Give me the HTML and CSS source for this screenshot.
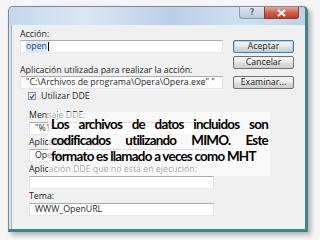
FILE: index.html
```html
<!DOCTYPE html>
<html lang="es">
<head>
<meta charset="utf-8">
<link rel="stylesheet" href="styles.css">
</head>
<body>
<div class="window">
  <div class="titlebar">
    <div class="tb-btn help">?</div>
    <div class="tb-btn close">
      <svg width="11" height="8" viewBox="0 0 11 8"><path d="M2 1 L9 7 M9 1 L2 7" stroke="#fff" stroke-width="2" fill="none"/></svg>
    </div>
  </div>
  <div class="content">
    <div class="fields">
      <div class="label">Acción:</div>
      <div class="input"><span class="sel">open</span><span class="caret"></span></div>
      <div class="label gap">Aplicación utilizada para realizar la acción:</div>
      <div class="input">"C:\Archivos de programa\Opera\Opera.exe" "</div>
      <div class="check-row">
        <span class="checkbox"><svg width="7" height="7" viewBox="0 0 7 7"><path d="M1 3.5 L3 5.5 L6.2 1" stroke="#2a5aa8" stroke-width="1.5" fill="none"/></svg></span>
        <span class="check-label">Utilizar DDE</span>
      </div>
      <div class="dde">
        <div class="label">Mensaje DDE:</div>
        <div class="input">"%1"</div>
        <div class="label">Aplicación:</div>
        <div class="input">Opera</div>
        <div class="label">Aplicación DDE que no está en ejecución:</div>
        <div class="input"></div>
        <div class="label">Tema:</div>
        <div class="input">WWW_OpenURL</div>
      </div>
    </div>
    <div class="buttons">
      <div class="button default">Aceptar</div>
      <div class="button">Cancelar</div>
      <div class="button browse">Examinar...</div>
    </div>
  </div>
  <div class="overlay">
    <span class="line full">Los archivos de datos incluidos son</span>
    <span class="line full">codificados utilizando MIMO. Este</span>
    <span class="line">formato es llamado a veces como MHT</span>
  </div>
</div>
</body>
</html>
```
FILE: styles.css
```css
html, body {
  margin: 0;
  padding: 0;
}
body {
  width: 320px;
  height: 240px;
  background: #f5f5f5;
  font-family: "Open Sans", "Noto Sans", sans-serif;
  overflow: hidden;
}
.window {
  position: relative;
  margin: 6px 0 0 8px;
  width: 296px;
  height: 222px;
  border-left: 1px solid #7d8a97;
  border-top: 1px solid #7d8a97;
  border-right: 3px solid #3a868d;
  border-bottom: 3px solid #3a868d;
  border-radius: 5px 5px 0 0;
  background: #d5e2ef;
  box-shadow: 3px 3px 5px rgba(0, 0, 0, 0.28);
  display: flex;
  flex-direction: column;
}
.titlebar {
  height: 18px;
  border-radius: 4px 4px 0 0;
  background: linear-gradient(to right, #c4d8ed 0%, #d9e7f4 25%, #b9d0e8 55%, #cfe0f1 80%, #bcd2ea 100%);
  display: flex;
  justify-content: flex-end;
  padding-right: 6px;
}
.tb-btn {
  height: 11px;
  display: flex;
  align-items: center;
  justify-content: center;
}
.help {
  width: 24px;
  background: linear-gradient(#dfe8f2, #b8c9dc);
  border: 1px solid #8c9cae;
  border-top: none;
  border-right: none;
  border-radius: 0 0 0 3px;
  color: #5f7288;
  font-family: "DejaVu Sans", sans-serif;
  font-weight: bold;
  font-size: 8px;
  line-height: 11px;
}
.close {
  width: 33px;
  background: linear-gradient(#e9a796, #d0614c 50%, #c23f2b);
  border: 1px solid #8e3b32;
  border-top: none;
  border-radius: 0 0 3px 0;
}
.content {
  flex: 1;
  background: #f0f0f0;
  border-left: 1px solid #a7b1bb;
  margin-left: 2px;
  display: flex;
  gap: 10px;
  padding: 4px 0 0 8px;
}
.fields {
  width: 203px;
  display: flex;
  flex-direction: column;
}
.label {
  font-size: 8.8px;
  line-height: 10px;
  height: 10px;
  color: #1f1f1f;
  white-space: nowrap;
  margin-bottom: 1px;
}
.label.gap {
  margin-top: 12px;
}
.input {
  height: 13px;
  box-sizing: border-box;
  background: #fff;
  border: 1px solid #abadb3;
  border-left-color: #e2e3ea;
  border-right-color: #dbdfe6;
  border-bottom-color: #e3e9ef;
  font-size: 8.8px;
  line-height: 11px;
  padding-left: 5px;
  color: #1f1f1f;
  white-space: nowrap;
  overflow: hidden;
  display: flex;
  align-items: center;
}
.sel {
  color: #1d3f8e;
  background: #d9e8f8;
}
.caret {
  width: 1px;
  height: 9px;
  background: #000;
  margin-left: 1px;
}
.check-row {
  margin-top: 2px;
  height: 10px;
  display: flex;
  align-items: center;
  padding-left: 8px;
}
.checkbox {
  width: 8px;
  height: 8px;
  box-sizing: border-box;
  border: 1px solid #8f8f8f;
  background: linear-gradient(#e6e6e6, #fdfdfd);
  display: flex;
  align-items: center;
  justify-content: center;
}
.check-label {
  font-size: 8.8px;
  line-height: 10px;
  margin-left: 5px;
  color: #1f1f1f;
}
.dde {
  margin-top: 9px;
  margin-left: 9px;
  width: 185px;
  display: flex;
  flex-direction: column;
}
.dde .label {
  margin-bottom: 2px;
}
.dde .input {
  margin-bottom: 2px;
}
.buttons {
  padding-top: 11px;
  display: flex;
  flex-direction: column;
  width: 61px;
}
.button {
  height: 13px;
  box-sizing: border-box;
  border: 1px solid #707070;
  border-radius: 2px;
  background: linear-gradient(#f3f3f3 0%, #ebebeb 48%, #dddddd 52%, #cfcfcf 100%);
  font-size: 8.8px;
  line-height: 11px;
  text-align: center;
  color: #1f1f1f;
  margin-bottom: 3px;
}
.button.default {
  border-color: #3c7fb1;
  box-shadow: inset 0 0 0 1px #a9d5f1;
}
.button.browse {
  margin-top: 4px;
}
.overlay {
  position: absolute;
  left: 39px;
  top: 105px;
  width: 222px;
  height: 64px;
  background: rgba(255, 255, 255, 0.6);
  padding: 4px 2px 0 3px;
  box-sizing: border-box;
  display: flex;
  flex-direction: column;
}
.line {
  display: block;
  font-family: "Lato", sans-serif;
  font-weight: bold;
  font-size: 13.4px;
  letter-spacing: -0.75px;
  line-height: 16px;
  white-space: nowrap;
  color: #000;
}
.line.full {
  text-align: justify;
  text-align-last: justify;
  white-space: normal;
}
```
